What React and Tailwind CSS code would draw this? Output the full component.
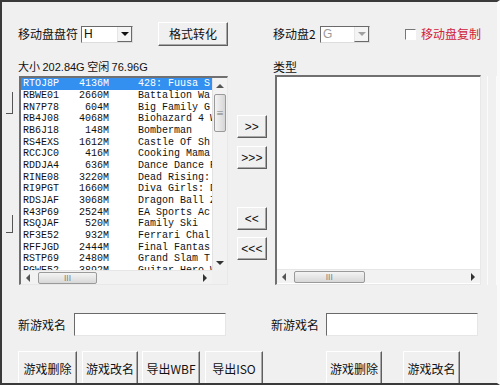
import React from 'react';

const games = [
  ['RTOJ8P', '4136M', '428: Fuusa S'],
  ['RBWE01', '2660M', 'Battalion Wa'],
  ['RN7P78', '604M', 'Big Family G'],
  ['RB4J08', '4068M', 'Biohazard 4 W'],
  ['RB6J18', '148M', 'Bomberman'],
  ['RS4EXS', '1612M', 'Castle Of Sh'],
  ['RCCJC0', '416M', 'Cooking Mama'],
  ['RDDJA4', '636M', 'Dance Dance R'],
  ['RINE08', '3220M', 'Dead Rising:'],
  ['RI9PGT', '1660M', 'Diva Girls: D'],
  ['RDSJAF', '3068M', 'Dragon Ball Z'],
  ['R43P69', '2524M', 'EA Sports Ac'],
  ['RSQJAF', '520M', 'Family Ski'],
  ['RF3E52', '932M', 'Ferrari Chal'],
  ['RFFJGD', '2444M', 'Final Fantas'],
  ['RSTP69', '2480M', 'Grand Slam T'],
  ['RGWE52', '3892M', 'Guitar Hero W'],
];

const cjk = { fontFamily: '"Noto Sans CJK SC", "Liberation Sans", sans-serif' };

// classic raised win32 button
const WinButton = ({ children, className = '' }) => (
  <div
    className={`flex items-center justify-center bg-[#f0f0f0] border border-t-white border-l-white border-r-[#5e5e5e] border-b-[#5e5e5e] shadow-[inset_-1px_-1px_0_#a8a8a8] text-[12px] text-[#111] ${className}`}
  >
    {children}
  </div>
);

const Arrow = ({ dir, color = '#333' }) => {
  const pts = {
    up: '0,5 4,1 8,5',
    down: '0,1 4,5 8,1',
    left: '5,0 1,4 5,8',
    right: '1,0 5,4 1,8',
  }[dir];
  const vert = dir === 'up' || dir === 'down';
  return (
    <svg width={vert ? 8 : 6} height={vert ? 6 : 8} viewBox={vert ? '0 0 8 6' : '0 0 6 8'}>
      <polygon points={pts} fill={color} />
    </svg>
  );
};

const ComboBox = ({ value, disabled, className = '' }) => (
  <div
    className={`flex h-[17px] bg-white border border-t-[#6a6a6a] border-l-[#6a6a6a] border-r-[#dcdcdc] border-b-[#dcdcdc] ${className}`}
  >
    <div
      className={`flex-1 pl-[2px] text-[12px] leading-[15px] ${disabled ? 'text-[#9a9a9a]' : 'text-[#111]'}`}
      style={{ fontFamily: '"Liberation Sans", sans-serif' }}
    >
      {value}
    </div>
    <div className="w-[15px] flex items-center justify-center bg-[#f4f4f4] border-l border-[#e6e6e6] border-b border-b-[#6a6a6a] border-r border-r-[#6a6a6a]">
      <Arrow dir="down" color={disabled ? '#a0a0a0' : '#111'} />
    </div>
  </div>
);

const HScrollbar = ({ thumbLeft, thumbWidth }) => (
  <div className="h-[14px] flex items-center bg-[#f2f2f2] border-t border-[#e6e6e6]">
    <div className="w-[14px] flex justify-center">
      <Arrow dir="left" color="#555" />
    </div>
    <div className="flex-1 h-full flex items-center">
      <div
        className="h-[12px] bg-gradient-to-b from-[#f4f4f4] to-[#d8d8d8] border border-[#9a9a9a] rounded-[2px] flex items-center justify-center text-[8px] leading-none text-[#777]"
        style={{ marginLeft: thumbLeft, width: thumbWidth }}
      >
        III
      </div>
    </div>
    <div className="w-[14px] flex justify-center">
      <Arrow dir="right" color="#333" />
    </div>
  </div>
);

const App = () => {
  return (
    <div
      className="relative w-[500px] h-[385px] overflow-hidden bg-[#f0f0f0] border-t-2 border-l-2 border-b-2 border-[#3a3a3a] border-r-[3px] border-r-[#fafafa] text-[#111]"
      style={cjk}
    >
      {/* stray window edge marks */}
      <div className="absolute left-[4px] top-[90px] w-[7px] h-[22px] border-r border-b border-[#555]" />
      <div className="absolute left-[4px] top-[213px] w-[7px] h-[18px] border-r border-b border-[#555]" />

      {/* row 1 */}
      <div className="flex items-center h-[24px] mt-[20px]">
        <span className="ml-[16px] w-[60px] text-[12px] leading-none">移动盘盘符</span>
        <ComboBox value="H" className="ml-[3px] w-[52px]" />
        <WinButton className="ml-[25px] w-[70px] h-[24px]">格式转化</WinButton>
        <span className="ml-[45px] w-[47px] text-[12px] leading-none">移动盘2</span>
        <ComboBox value="G" disabled className="w-[50px]" />
        <div className="ml-[35px] w-[11px] h-[11px] bg-white border border-t-[#777] border-l-[#777] border-r-white border-b-white" />
        <span className="ml-[5px] text-[12px] leading-none text-[#d0203a]">移动盘复制</span>
      </div>

      {/* row 2 labels */}
      <div className="flex items-center h-[14px] mt-[14px]">
        <span className="ml-[16px] w-[255px] text-[11px] leading-none whitespace-nowrap">
          大小 <span style={{ fontFamily: '"Liberation Sans", sans-serif' }}>202.84G</span> 空闲{' '}
          <span style={{ fontFamily: '"Liberation Sans", sans-serif' }}>76.96G</span>
        </span>
        <span className="text-[12px] leading-none">类型</span>
      </div>

      {/* lists */}
      <div className="flex mt-[2px] h-[209px]">
        {/* left list */}
        <div className="ml-[17px] w-[209px] h-full flex flex-col bg-white border-t-2 border-l-2 border-[#707070] border-r border-b border-r-[#e8e8e8] border-b-[#e8e8e8]">
          <div className="flex flex-1 min-h-0">
            <div
              className="w-[191px] overflow-hidden text-[10px]"
              style={{ fontFamily: '"Liberation Mono", "DejaVu Sans Mono", monospace' }}
            >
              {games.map((g, i) => (
                <div
                  key={g[0]}
                  className={`flex h-[11.67px] items-center whitespace-nowrap ${i === 0 ? 'bg-[#3390f0] text-white' : 'text-[#111]'}`}
                >
                  <span className="shrink-0 pl-[2px] w-[52px]">{g[0]}</span>
                  <span className="shrink-0 w-[36px] text-right">{g[1]}</span>
                  <span className="shrink-0 ml-[29px]">{g[2]}</span>
                </div>
              ))}
            </div>
            <div className="w-[15px] flex flex-col items-center bg-[#f2f2f2] border-l border-[#e2e2e2]">
              <div className="h-[16px] flex items-center">
                <Arrow dir="up" color="#555" />
              </div>
              <div className="w-[12px] h-[38px] bg-gradient-to-r from-[#f4f4f4] to-[#d6d6d6] border border-[#9a9a9a] rounded-[2px] flex items-center justify-center text-[8px] leading-none text-[#777]">
                ≡
              </div>
              <div className="flex-1" />
              <div className="h-[14px] flex items-center">
                <Arrow dir="down" color="#333" />
              </div>
            </div>
          </div>
          <div className="flex">
            <div className="w-[191px]">
              <HScrollbar thumbLeft={3} thumbWidth={59} />
            </div>
            <div className="w-[15px] bg-[#f0f0f0]" />
          </div>
        </div>

        {/* middle buttons */}
        <div className="ml-[9px] w-[30px] flex flex-col text-[12px]" style={{ fontFamily: '"Liberation Sans", sans-serif' }}>
          <WinButton className="mt-[39px] h-[23px]">&gt;&gt;</WinButton>
          <WinButton className="mt-[8px] h-[23px]">&gt;&gt;&gt;</WinButton>
          <WinButton className="mt-[38px] h-[23px]">&lt;&lt;</WinButton>
          <WinButton className="mt-[7px] h-[23px]">&lt;&lt;&lt;</WinButton>
        </div>

        {/* right list */}
        <div className="ml-[8px] w-[208px] h-[210px] -mt-[1px] flex flex-col bg-white border-t-2 border-l-2 border-[#707070] border-r border-b border-r-[#e8e8e8] border-b-[#e8e8e8]">
          <div className="flex-1" />
          <HScrollbar thumbLeft={3} thumbWidth={71} />
          <div className="h-[1px]" />
        </div>
        <div className="ml-[6px] w-[10px] border-l border-r border-[#fbfbfb]" />
      </div>

      {/* new name row */}
      <div className="flex items-center h-[23px] mt-[28px]">
        <span className="ml-[16px] w-[56px] text-[12px] leading-none">新游戏名</span>
        <div className="w-[152px] h-[23px] bg-white border border-t-[#6a6a6a] border-l-[#6a6a6a] border-r-[#e6e6e6] border-b-[#e6e6e6]" />
        <span className="ml-[45px] w-[55px] text-[12px] leading-none">新游戏名</span>
        <div className="w-[152px] h-[23px] bg-white border border-t-[#6a6a6a] border-l-[#6a6a6a] border-r-[#e6e6e6] border-b-[#e6e6e6]" />
      </div>

      {/* bottom buttons */}
      <div className="flex mt-[15px]">
        <WinButton className="ml-[16px] w-[59px] h-[36px]">游戏删除</WinButton>
        <WinButton className="ml-[5px] w-[56px] h-[36px]">游戏改名</WinButton>
        <WinButton className="ml-[4px] w-[58px] h-[36px]">导出WBF</WinButton>
        <WinButton className="ml-[5px] w-[58px] h-[36px]">导出ISO</WinButton>
        <WinButton className="ml-[63px] w-[56px] h-[36px]">游戏删除</WinButton>
        <WinButton className="ml-[21px] w-[57px] h-[36px]">游戏改名</WinButton>
      </div>
    </div>
  );
};

export default App;
